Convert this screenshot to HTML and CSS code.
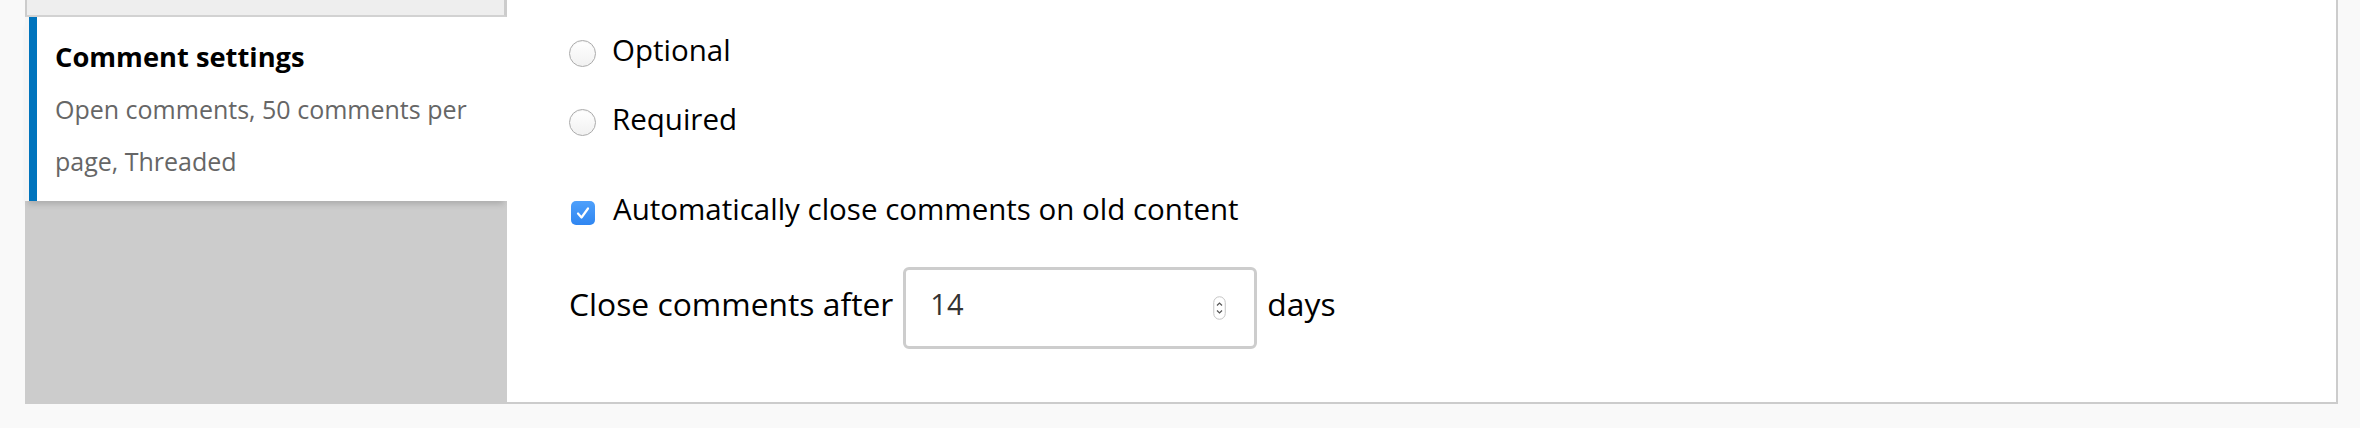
FILE: index.html
```html
<!DOCTYPE html>
<html lang="en">
<head>
<meta charset="utf-8">
<title>Comment settings</title>
<link rel="stylesheet" href="styles.css">
</head>
<body>
<div class="vtabs">
  <ul class="vtabs-menu">
    <li class="vtab vtab-prev"></li>
    <li class="vtab vtab-active">
      <a class="vtab-link" href="#comment">
        <strong class="vtab-title">Comment settings</strong>
        <span class="vtab-summary">Open comments, 50 comments per page, Threaded</span>
      </a>
    </li>
  </ul>
  <div class="vtabs-panes">
    <div class="form-item radio-item">
      <span class="radio"></span>
      <label class="option">Optional</label>
    </div>
    <div class="form-item radio-item">
      <span class="radio"></span>
      <label class="option">Required</label>
    </div>
    <div class="form-item check-item">
      <span class="checkbox">
        <svg width="24" height="24" viewBox="0 0 24 24"><path d="M7 12.5 L10.5 16.5 L17 7.5" fill="none" stroke="#fff" stroke-width="2.2" stroke-linecap="round" stroke-linejoin="round"/></svg>
      </span>
      <label class="option">Automatically close comments on old content</label>
    </div>
    <div class="form-item days-item">
      <label class="days-label">Close comments after</label>
      <div class="number-field">
        <input class="number-input" type="text" value="14">
        <svg class="spinner" width="13" height="24" viewBox="0 0 13 24"><rect x="0.75" y="0.75" width="11.5" height="22.5" rx="5.75" fill="#fff" stroke="#c4c4c4" stroke-width="1"/><polyline points="4,9.5 6.5,7 9,9.5" fill="none" stroke="#555" stroke-width="1.2"/><polyline points="4,14.5 6.5,17 9,14.5" fill="none" stroke="#555" stroke-width="1.2"/></svg>
      </div>
      <span class="days-suffix">days</span>
    </div>
  </div>
</div>
</body>
</html>
```
FILE: styles.css
```css
html, body {
  margin: 0;
  padding: 0;
  background: #f9f9f9;
  font-family: "Open Sans", "Liberation Sans", sans-serif;
}

.vtabs {
  display: flex;
  margin-left: 25px;
  width: 2311px;
  height: 402px;
  border-right: 2px solid #cccccc;
  border-bottom: 2px solid #cccccc;
}

.vtabs-menu {
  list-style: none;
  margin: 0;
  padding: 0;
  width: 482px;
  flex: none;
  background: #cccccc;
}

.vtab-prev {
  height: 15px;
  background: #eeeeee;
  border-left: 2px solid #cccccc;
  border-right: 3px solid #cccccc;
  border-bottom: 2px solid #d2d2d2;
}

.vtab-active {
  background: #ffffff;
  border-left: 4px solid #f5f5f5;
  box-shadow: 0 6px 6px -3px rgba(0, 0, 0, 0.16);
}

.vtab-link {
  display: block;
  border-left: 8px solid #0074bd;
  padding: 20px 20px 14px 18px;
  text-decoration: none;
}

.vtab-title {
  display: block;
  font-size: 27.3px;
  line-height: 40px;
  font-weight: 700;
  color: #000000;
  margin-bottom: 6px;
}

.vtab-summary {
  display: block;
  font-size: 25px;
  line-height: 52px;
  color: #666666;
}

.vtabs-panes {
  flex: 1;
  background: #ffffff;
  padding: 30px 0 0 62px;
}

.form-item {
  display: flex;
  align-items: center;
  font-size: 29.5px;
  line-height: 40px;
  color: #000000;
}

.radio-item + .radio-item {
  margin-top: 29px;
}

.check-item {
  margin-top: 50px;
}

.days-item {
  margin-top: 38px;
  font-size: 31.8px;
}

.radio {
  width: 25px;
  height: 25px;
  border-radius: 50%;
  border: 1.5px solid #ababab;
  background: linear-gradient(#ffffff, #f1f1f1);
  box-shadow: inset 0 1px 1px rgba(0, 0, 0, 0.05);
  margin: 6px 16px 0 0;
  flex: none;
}

.checkbox {
  width: 24px;
  height: 24px;
  border-radius: 5px;
  background: linear-gradient(#4ea0fb, #2f86f1);
  margin: 8px 18px 0 2px;
  flex: none;
  display: flex;
}

.days-label {
  margin-bottom: 8px;
}

.number-field {
  display: flex;
  align-items: center;
  box-sizing: border-box;
  width: 354px;
  height: 82px;
  margin: 0 10px;
  border: 3px solid #cdcdcd;
  border-radius: 6px;
  padding: 0 28px 0 24px;
  background: #ffffff;
}

.number-input {
  flex: 1;
  min-width: 0;
  border: 0;
  padding: 0;
  margin: 0 0 8px 0;
  outline: none;
  background: transparent;
  font-family: "Open Sans", "Liberation Sans", sans-serif;
  font-size: 29px;
  line-height: 40px;
  height: 40px;
  color: #333333;
}

.spinner {
  flex: none;
}

.days-suffix {
  margin-bottom: 8px;
}
```
